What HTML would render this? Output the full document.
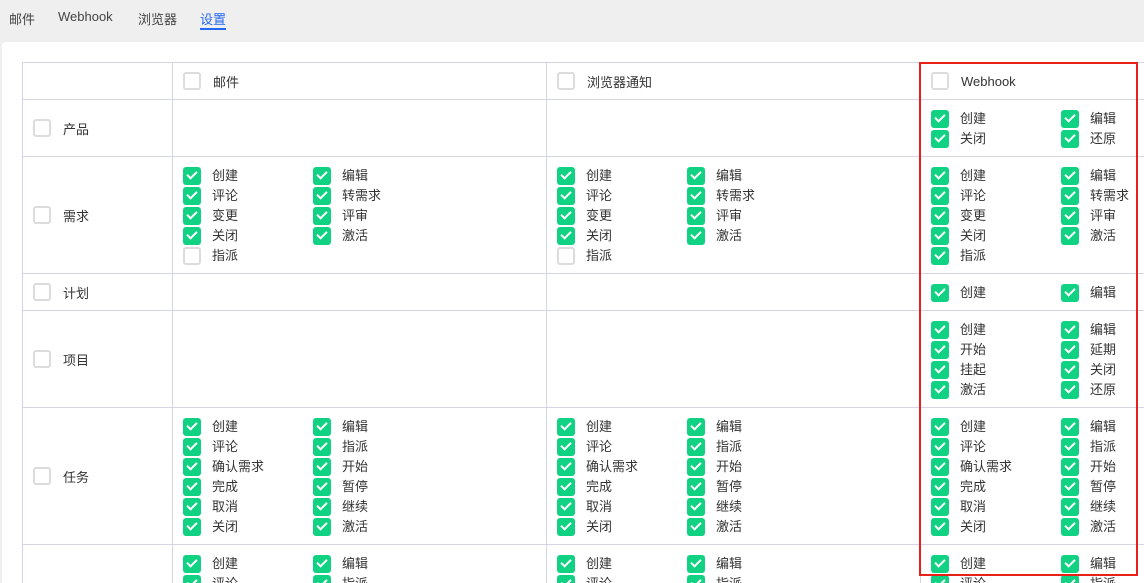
<!DOCTYPE html><html><head><meta charset="utf-8"><style>
*{box-sizing:border-box;margin:0;padding:0}
html,body{width:1144px;height:583px;overflow:hidden}
body{background:#efefef;font-family:"Liberation Sans","Noto Sans CJK SC",sans-serif;font-size:13px;color:#333;position:relative}
.tabs{position:absolute;top:0;left:0;height:42px;width:400px}
.tab{position:absolute;top:9px;font-size:13px;color:#444;white-space:nowrap}
.tab.a{color:#2468f2}
.ul{position:absolute;left:200px;top:28px;width:26px;height:2px;background:#2468f2}
.panel{position:absolute;left:2px;top:42px;width:1150px;height:560px;background:#fff;border-radius:4px}
table{position:absolute;left:22px;top:62px;border-collapse:collapse;table-layout:fixed;width:1200px}
td{border:1px solid #d3d5e2;vertical-align:top;padding:8px 0 7px 10px;background:#fff;white-space:nowrap}
td.h{vertical-align:middle;padding:0 0 0 10px}
.cb{display:inline-block;width:18px;height:18px;border-radius:3px;vertical-align:middle;position:relative}
.on{background:#11d183}
.off{border:2px solid #dcdcdc;background:#fff}
.on:after{content:"";position:absolute;left:6px;top:2.5px;width:4px;height:8px;border:solid #fff;border-width:0 2.5px 2.5px 0;transform:rotate(45deg)}
.it{display:inline-block;width:130px;height:20px;line-height:20px;white-space:nowrap;vertical-align:top}
.it span,.h span{margin-left:11px;vertical-align:middle}
.h span{margin-left:12px}
#box{position:absolute;left:919px;top:62px;width:219px;height:514px;border:2px solid #e8201a}
</style></head><body>
<div class="tabs"><span class="tab" style="left:9px">邮件</span><span class="tab" style="left:58px">Webhook</span><span class="tab" style="left:138px">浏览器</span><span class="tab a" style="left:200px">设置</span><div class="ul"></div></div>
<div class="panel"></div>
<table>
<colgroup><col style="width:150px"><col style="width:374px"><col style="width:374px"><col></colgroup>
<tr style="height:37px"><td class="h"></td><td class="h"><i class="cb off"></i><span>邮件</span></td><td class="h"><i class="cb off"></i><span>浏览器通知</span></td><td class="h"><i class="cb off"></i><span>Webhook</span></td></tr>
<tr style="height:57px"><td class="h"><i class="cb off"></i><span>产品</span></td><td></td><td></td><td><div class="it"><i class="cb on"></i><span>创建</span></div><div class="it"><i class="cb on"></i><span>编辑</span></div><br><div class="it"><i class="cb on"></i><span>关闭</span></div><div class="it"><i class="cb on"></i><span>还原</span></div></td></tr>
<tr style="height:117px"><td class="h"><i class="cb off"></i><span>需求</span></td>
<td><div class="it"><i class="cb on"></i><span>创建</span></div><div class="it"><i class="cb on"></i><span>编辑</span></div><br><div class="it"><i class="cb on"></i><span>评论</span></div><div class="it"><i class="cb on"></i><span>转需求</span></div><br><div class="it"><i class="cb on"></i><span>变更</span></div><div class="it"><i class="cb on"></i><span>评审</span></div><br><div class="it"><i class="cb on"></i><span>关闭</span></div><div class="it"><i class="cb on"></i><span>激活</span></div><br><div class="it"><i class="cb off"></i><span>指派</span></div></td>
<td><div class="it"><i class="cb on"></i><span>创建</span></div><div class="it"><i class="cb on"></i><span>编辑</span></div><br><div class="it"><i class="cb on"></i><span>评论</span></div><div class="it"><i class="cb on"></i><span>转需求</span></div><br><div class="it"><i class="cb on"></i><span>变更</span></div><div class="it"><i class="cb on"></i><span>评审</span></div><br><div class="it"><i class="cb on"></i><span>关闭</span></div><div class="it"><i class="cb on"></i><span>激活</span></div><br><div class="it"><i class="cb off"></i><span>指派</span></div></td>
<td><div class="it"><i class="cb on"></i><span>创建</span></div><div class="it"><i class="cb on"></i><span>编辑</span></div><br><div class="it"><i class="cb on"></i><span>评论</span></div><div class="it"><i class="cb on"></i><span>转需求</span></div><br><div class="it"><i class="cb on"></i><span>变更</span></div><div class="it"><i class="cb on"></i><span>评审</span></div><br><div class="it"><i class="cb on"></i><span>关闭</span></div><div class="it"><i class="cb on"></i><span>激活</span></div><br><div class="it"><i class="cb on"></i><span>指派</span></div></td></tr>
<tr style="height:37px"><td class="h"><i class="cb off"></i><span>计划</span></td><td></td><td></td><td><div class="it"><i class="cb on"></i><span>创建</span></div><div class="it"><i class="cb on"></i><span>编辑</span></div></td></tr>
<tr style="height:97px"><td class="h"><i class="cb off"></i><span>项目</span></td><td></td><td></td><td><div class="it"><i class="cb on"></i><span>创建</span></div><div class="it"><i class="cb on"></i><span>编辑</span></div><br><div class="it"><i class="cb on"></i><span>开始</span></div><div class="it"><i class="cb on"></i><span>延期</span></div><br><div class="it"><i class="cb on"></i><span>挂起</span></div><div class="it"><i class="cb on"></i><span>关闭</span></div><br><div class="it"><i class="cb on"></i><span>激活</span></div><div class="it"><i class="cb on"></i><span>还原</span></div></td></tr>
<tr style="height:137px"><td class="h"><i class="cb off"></i><span>任务</span></td>
<td><div class="it"><i class="cb on"></i><span>创建</span></div><div class="it"><i class="cb on"></i><span>编辑</span></div><br><div class="it"><i class="cb on"></i><span>评论</span></div><div class="it"><i class="cb on"></i><span>指派</span></div><br><div class="it"><i class="cb on"></i><span>确认需求</span></div><div class="it"><i class="cb on"></i><span>开始</span></div><br><div class="it"><i class="cb on"></i><span>完成</span></div><div class="it"><i class="cb on"></i><span>暂停</span></div><br><div class="it"><i class="cb on"></i><span>取消</span></div><div class="it"><i class="cb on"></i><span>继续</span></div><br><div class="it"><i class="cb on"></i><span>关闭</span></div><div class="it"><i class="cb on"></i><span>激活</span></div></td>
<td><div class="it"><i class="cb on"></i><span>创建</span></div><div class="it"><i class="cb on"></i><span>编辑</span></div><br><div class="it"><i class="cb on"></i><span>评论</span></div><div class="it"><i class="cb on"></i><span>指派</span></div><br><div class="it"><i class="cb on"></i><span>确认需求</span></div><div class="it"><i class="cb on"></i><span>开始</span></div><br><div class="it"><i class="cb on"></i><span>完成</span></div><div class="it"><i class="cb on"></i><span>暂停</span></div><br><div class="it"><i class="cb on"></i><span>取消</span></div><div class="it"><i class="cb on"></i><span>继续</span></div><br><div class="it"><i class="cb on"></i><span>关闭</span></div><div class="it"><i class="cb on"></i><span>激活</span></div></td>
<td><div class="it"><i class="cb on"></i><span>创建</span></div><div class="it"><i class="cb on"></i><span>编辑</span></div><br><div class="it"><i class="cb on"></i><span>评论</span></div><div class="it"><i class="cb on"></i><span>指派</span></div><br><div class="it"><i class="cb on"></i><span>确认需求</span></div><div class="it"><i class="cb on"></i><span>开始</span></div><br><div class="it"><i class="cb on"></i><span>完成</span></div><div class="it"><i class="cb on"></i><span>暂停</span></div><br><div class="it"><i class="cb on"></i><span>取消</span></div><div class="it"><i class="cb on"></i><span>继续</span></div><br><div class="it"><i class="cb on"></i><span>关闭</span></div><div class="it"><i class="cb on"></i><span>激活</span></div></td></tr>
<tr style="height:137px"><td class="h"></td>
<td><div class="it"><i class="cb on"></i><span>创建</span></div><div class="it"><i class="cb on"></i><span>编辑</span></div><br><div class="it"><i class="cb on"></i><span>评论</span></div><div class="it"><i class="cb on"></i><span>指派</span></div></td>
<td><div class="it"><i class="cb on"></i><span>创建</span></div><div class="it"><i class="cb on"></i><span>编辑</span></div><br><div class="it"><i class="cb on"></i><span>评论</span></div><div class="it"><i class="cb on"></i><span>指派</span></div></td>
<td><div class="it"><i class="cb on"></i><span>创建</span></div><div class="it"><i class="cb on"></i><span>编辑</span></div><br><div class="it"><i class="cb on"></i><span>评论</span></div><div class="it"><i class="cb on"></i><span>指派</span></div></td></tr>
</table>
<div id="box"></div>
</body></html>
